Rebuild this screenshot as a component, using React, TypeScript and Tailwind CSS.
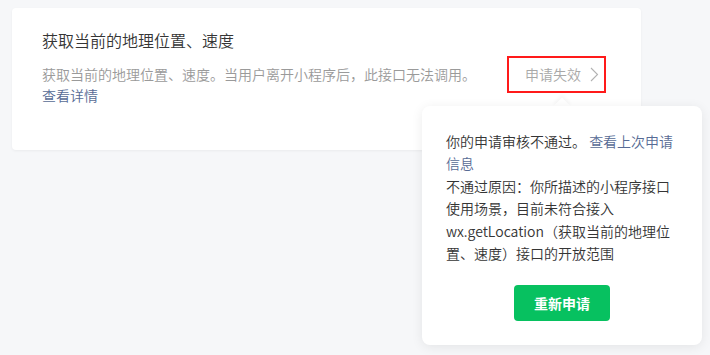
import React from 'react';

const font = { fontFamily: '"Noto Sans CJK SC", "Noto Sans", sans-serif' };

const ChevronRight: React.FC = () => (
  <svg width="9" height="15" viewBox="0 0 9 15" fill="none" className="ml-[9px]">
    <path d="M1 1l6.5 6.5L1 14" stroke="#b2b2b2" strokeWidth="1.1" />
  </svg>
);

const Popover: React.FC = () => (
  <div className="absolute left-[-85px] top-[50px] w-[280px]">
    <div className="absolute left-[134px] top-[-6px] h-[12px] w-[12px] rotate-45 bg-white shadow-[-2px_-2px_4px_rgba(0,0,0,0.04)]" />
    <div className="relative rounded-[8px] bg-white px-[24px] pt-[24px] pb-[24px] shadow-[0_2px_12px_rgba(0,0,0,0.08)]">
      <div className="text-[14px] leading-[22.4px] text-[#353535]">
        你的申请审核不通过。 <span className="text-[#576b95]">查看上次申请信息</span>
        <br />
        不通过原因：你所描述的小程序接口使用场景，目前未符合接入wx.getLocation（获取当前的地理位置、速度）接口的开放范围
      </div>
      <div className="mt-[21px] flex justify-center">
        <button className="h-[36px] w-[96px] rounded-[4px] bg-[#07c160] text-[14px] font-bold text-white">
          重新申请
        </button>
      </div>
    </div>
  </div>
);

export default function App() {
  return (
    <div className="h-[355px] w-[710px] bg-[#f6f7f9] pl-[12px] pt-[8px] font-[350]" style={font}>
      <div className="flex h-[142px] w-[629px] flex-col rounded-[4px] bg-white pl-[30px] pr-[35px] pt-[20px] shadow-[0_1px_3px_rgba(0,0,0,0.05)]">
        <div className="text-[16px] leading-[24px] text-[#353535]">获取当前的地理位置、速度</div>
        <div className="mt-[12px] flex items-start justify-between">
          <div className="text-[14px] leading-[21px]">
            <div className="text-[#9a9a9a]">获取当前的地理位置、速度。当用户离开小程序后，此接口无法调用。</div>
            <div className="text-[#576b95]">查看详情</div>
          </div>
          <div className="relative mt-[-8px]">
            <div className="flex h-[37px] w-[99px] items-center border-2 border-[#ff1a1a] pl-[16px] text-[14px] text-[#a8a8a8]">
              申请失效
              <ChevronRight />
            </div>
            <Popover />
          </div>
        </div>
      </div>
    </div>
  );
}
